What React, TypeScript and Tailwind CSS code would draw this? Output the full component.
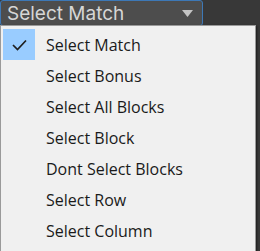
const items = [
  "Select Match",
  "Select Bonus",
  "Select All Blocks",
  "Select Block",
  "Dont Select Blocks",
  "Select Row",
  "Select Column",
];

export default function App() {
  const selected = "Select Match";

  return (
    <div className="relative h-[251px] w-[260px] overflow-hidden bg-[#383838]">
      <div className="flex h-[26px] w-[203px] items-center justify-between rounded-[3px] border border-[#3d78b6] bg-[#4d4d4d] pl-[6px] pr-[9px]">
        <span className="font-['Inter'] text-[19px] leading-none text-[#d6d6d6]">{selected}</span>
        <svg width="11" height="7" viewBox="0 0 11 7">
          <path d="M0 0h11L5.5 7z" fill="#c4c4c4" />
        </svg>
      </div>

      <div className="absolute left-0 top-[25px] w-[256px] border border-[#9a9a9a] bg-[#f0f0f0] pb-[5px] pt-[3px] pl-[2px] shadow-[1px_1px_2px_rgba(0,0,0,0.5)]">
        {items.map((item) => (
          <div key={item} className="flex h-[31px] items-center">
            <div
              className={
                "flex h-[31px] w-[32px] items-center justify-center " +
                (item === selected ? "bg-[#99ccff]" : "")
              }
            >
              {item === selected && (
                <svg width="15" height="12" viewBox="0 0 15 12">
                  <path d="M1 6l4.5 4.5L14 1.5" fill="none" stroke="#1e1e1e" strokeWidth="1.7" />
                </svg>
              )}
            </div>
            <span className="pl-[11px] font-['Open_Sans'] text-[16px] leading-none text-[#1a1a1a]">{item}</span>
          </div>
        ))}
      </div>
    </div>
  );
}
